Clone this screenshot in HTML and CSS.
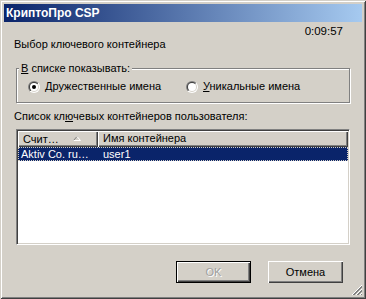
FILE: index.html
```html
<!DOCTYPE html>
<html>
<head>
<meta charset="utf-8">
<title>КриптоПро CSP</title>
<link rel="stylesheet" href="styles.css">
</head>
<body>
<div class="window">
  <div class="titlebar">КриптоПро CSP</div>
  <div class="body">
    <div class="timer">0:09:57</div>
    <div class="heading">Выбор ключевого контейнера</div>
    <fieldset class="group">
      <legend class="legend"><u>В</u> списке показывать:</legend>
      <div class="radios">
        <label class="radio">
          <svg class="radio-icon" width="12" height="12" viewBox="0 0 12 12">
            <defs>
              <linearGradient id="ro1" x1="0" y1="0" x2="1" y2="1"><stop offset="0.5" stop-color="#808080"/><stop offset="0.5" stop-color="#ffffff"/></linearGradient>
              <linearGradient id="ri1" x1="0" y1="0" x2="1" y2="1"><stop offset="0.5" stop-color="#404040"/><stop offset="0.5" stop-color="#d4d0c8"/></linearGradient>
            </defs>
            <circle cx="6" cy="6" r="6" fill="url(#ro1)"/>
            <circle cx="6" cy="6" r="5" fill="url(#ri1)"/>
            <circle cx="6" cy="6" r="4" fill="#fff"/>
            <circle cx="6" cy="6" r="2" fill="#000"/>
          </svg>
          <span><u>Д</u>ружественные имена</span>
        </label>
        <label class="radio">
          <svg class="radio-icon" width="12" height="12" viewBox="0 0 12 12">
            <circle cx="6" cy="6" r="6" fill="url(#ro1)"/>
            <circle cx="6" cy="6" r="5" fill="url(#ri1)"/>
            <circle cx="6" cy="6" r="4" fill="#fff"/>
          </svg>
          <span><u>У</u>никальные имена</span>
        </label>
      </div>
    </fieldset>
    <div class="listlabel">Список кл<u>ю</u>чевых контейнеров пользователя:</div>
    <div class="list">
      <div class="header">
        <div class="hcol c1">
          <span>Счит…</span>
          <svg class="sort" width="8" height="5" viewBox="0 0 8 5">
            <path d="M0.5 4.5 L4 0.5" stroke="#808080" fill="none"/>
            <path d="M4 0.5 L7.5 4.5 M0.5 4.5 H7.5" stroke="#fff" fill="none"/>
          </svg>
        </div>
        <div class="hcol c2">Имя контейнера</div>
      </div>
      <div class="row selected">
        <div class="cell c1">Aktiv Co. ru…</div>
        <div class="cell c2">user1</div>
      </div>
    </div>
    <div class="buttons">
      <button class="btn default disabled" disabled>OK</button>
      <button class="btn cancel">Отмена</button>
    </div>
  </div>
  <svg class="grip" width="12" height="12" viewBox="0 0 12 12">
    <path d="M11 1 L1 11 M11 5 L5 11 M11 9 L9 11" stroke="#fff" fill="none"/>
    <path d="M11 2 L2 11 M11 3 L3 11 M11 6 L6 11 M11 7 L7 11 M11 10 L10 11" stroke="#808080" fill="none"/>
  </svg>
</div>
</body>
</html>
```

FILE: styles.css
```css
* { box-sizing: border-box; }
html, body { margin: 0; padding: 0; }
body {
  width: 366px;
  height: 299px;
  overflow: hidden;
  background: #d4d0c8;
  font-family: "Liberation Sans", Arial, sans-serif;
  font-size: 11px;
  color: #000;
}
.window {
  position: relative;
  width: 366px;
  height: 299px;
  padding: 4px;
  background: #d4d0c8;
  box-shadow: inset 1px 1px 0 #d4d0c8, inset -1px -1px 0 #404040, inset 2px 2px 0 #fff, inset -2px -2px 0 #808080;
  display: flex;
  flex-direction: column;
}
.titlebar {
  height: 18px;
  line-height: 18px;
  padding-left: 2px;
  color: #fff;
  font-weight: bold;
  font-size: 12px;
  background: linear-gradient(to right, #0a246a, #a6caf0);
}
.body {
  display: flex;
  flex-direction: column;
  padding: 0 12px 0 10px;
}
.timer {
  margin-top: 3px;
  height: 13px;
  line-height: 13px;
  text-align: right;
  padding-right: 7px;
  font-size: 11.5px;
}
.heading {
  height: 13px;
  line-height: 13px;
}
.group {
  margin: 11px 0 0 2px;
  padding: 0;
  min-width: 0;
  border: 1px solid #808080;
  box-shadow: inset 1px 1px 0 #fff, 1px 1px 0 #fff;
}
.legend {
  margin-left: 2px;
  padding: 0 2px;
  height: 13px;
  line-height: 13px;
  background: #d4d0c8;
}
.radios {
  display: grid;
  grid-template-columns: 158px auto;
  padding: 5px 0 9px 11px;
}
.radio {
  display: flex;
  align-items: center;
  height: 13px;
  line-height: 13px;
  gap: 5px;
}
.radio-icon { flex: none; }
.listlabel {
  margin-top: 7px;
  height: 13px;
  line-height: 13px;
}
.list {
  margin: 6px 0 0 2px;
  height: 116px;
  background: #fff;
  border: 1px solid;
  border-color: #808080 #fff #fff #808080;
  box-shadow: inset 1px 1px 0 #404040, inset -1px -1px 0 #d4d0c8;
  padding: 1px;
}
.header {
  display: flex;
  height: 16px;
}
.hcol {
  height: 16px;
  line-height: 15px;
  padding-left: 5px;
  background: #d4d0c8;
  box-shadow: inset 1px 1px 0 #fff, inset -1px -1px 0 #404040, inset -2px -2px 0 #808080;
  white-space: nowrap;
  overflow: hidden;
}
.hcol.c1 {
  width: 80px;
  display: flex;
  align-items: center;
}
.hcol.c1 span { width: 50px; }
.sort { flex: none; margin-top: -1px; }
.hcol.c2 { flex: 1; }
.row {
  display: flex;
  height: 14px;
  line-height: 12px;
}
.row.selected {
  background: #0a246a;
  color: #fff;
  outline: 1px dotted #d4d0c8;
  outline-offset: -1px;
}
.cell {
  white-space: nowrap;
  overflow: hidden;
  padding-top: 1px;
}
.cell.c1 { width: 80px; padding-left: 3px; }
.cell.c2 { flex: 1; padding-left: 5px; }
.buttons {
  display: flex;
  justify-content: flex-end;
  gap: 17px;
  margin-top: 16px;
  margin-right: 7px;
}
.btn {
  width: 75px;
  height: 22px;
  padding: 0;
  font-family: inherit;
  font-size: 11px;
  color: #000;
  background: #d4d0c8;
  border: 0;
  box-shadow: inset 1px 1px 0 #fff, inset -1px -1px 0 #404040, inset -2px -2px 0 #808080;
}
.btn.default {
  border: 1px solid #000;
}
.btn.disabled {
  color: #a0a0a0;
  text-shadow: 1px 1px 0 #fff;
}
.grip {
  position: absolute;
  right: 3px;
  bottom: 3px;
}
```
